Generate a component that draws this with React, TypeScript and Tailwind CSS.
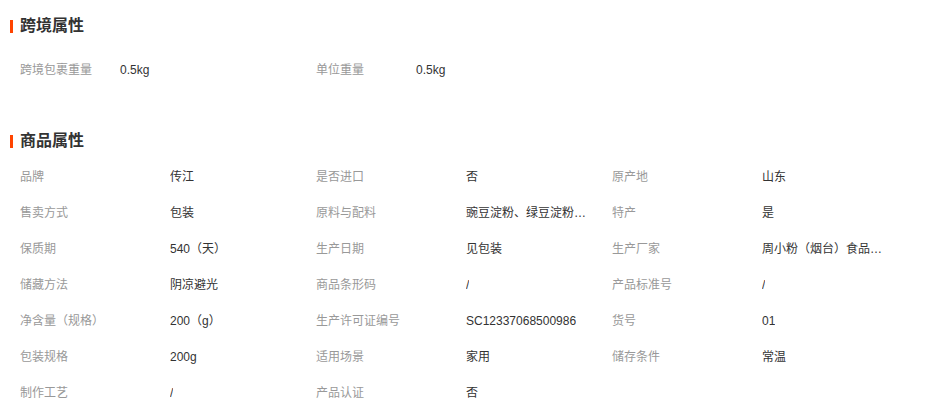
import React from "react";

type Item = [string, string];

const cross: Item[] = [
  ["跨境包裹重量", "0.5kg"],
  ["单位重量", "0.5kg"],
];

const goods: Item[] = [
  ["品牌", "传江"],
  ["是否进口", "否"],
  ["原产地", "山东"],
  ["售卖方式", "包装"],
  ["原料与配料", "豌豆淀粉、绿豆淀粉、水"],
  ["特产", "是"],
  ["保质期", "540（天）"],
  ["生产日期", "见包装"],
  ["生产厂家", "周小粉（烟台）食品有限公司"],
  ["储藏方法", "阴凉避光"],
  ["商品条形码", "/"],
  ["产品标准号", "/"],
  ["净含量（规格）", "200（g）"],
  ["生产许可证编号", "SC12337068500986"],
  ["货号", "01"],
  ["包装规格", "200g"],
  ["适用场景", "家用"],
  ["储存条件", "常温"],
  ["制作工艺", "/"],
  ["产品认证", "否"],
];

function Title({ text }: { text: string }) {
  return (
    <div className="flex h-[32px] items-center pl-[10px]">
      <span className="mr-[7px] h-[13px] w-[3px] bg-[#ff4400]" />
      <span className="text-[16px] font-bold text-[#333]">{text}</span>
    </div>
  );
}

export default function App() {
  return (
    <div
      className="h-[410px] w-[926px] overflow-hidden bg-white pt-[10px] text-[12px]"
      style={{ fontFamily: '"Liberation Sans", Arial, "Noto Sans CJK SC", sans-serif' }}
    >
      <Title text="跨境属性" />
      <div className="mt-[10px] flex pl-[20px]">
        {cross.map(([k, v]) => (
          <div key={k} className="flex h-[36px] w-[296px] items-center">
            <span className="w-[100px] shrink-0 text-[#999]">{k}</span>
            <span className="text-[#333]">{v}</span>
          </div>
        ))}
      </div>
      <div className="mt-[37px]">
        <Title text="商品属性" />
      </div>
      <div className="mt-[2px] grid grid-cols-[296px_296px_296px] pl-[20px]">
        {goods.map(([k, v]) => (
          <div key={k} className="flex h-[36px] items-center">
            <span className="w-[150px] shrink-0 text-[#999]">{k}</span>
            <span className="max-w-[124px] overflow-hidden text-ellipsis whitespace-nowrap text-[#333]">
              {v}
            </span>
          </div>
        ))}
      </div>
    </div>
  );
}
